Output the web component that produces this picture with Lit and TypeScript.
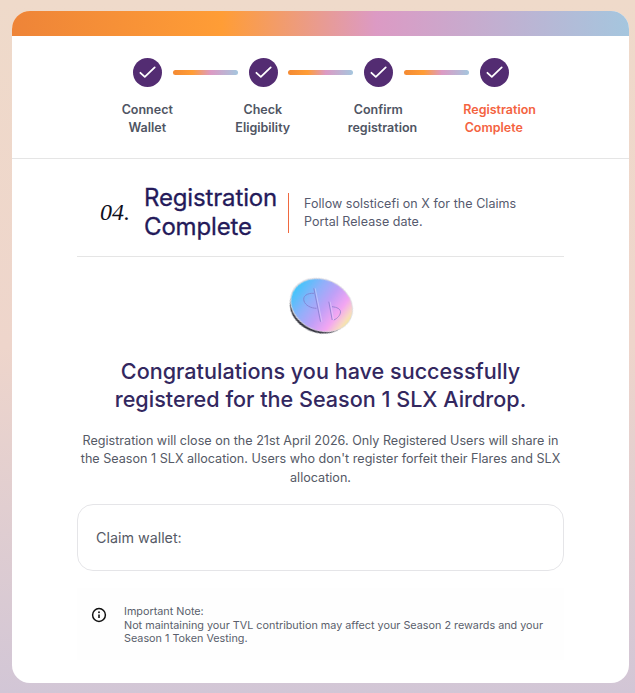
import { LitElement, html, css, svg } from "lit";
import { customElement } from "lit/decorators.js";

const steps: [string, string][] = [
  ["Connect", "Wallet"],
  ["Check", "Eligibility"],
  ["Confirm", "registration"],
  ["Registration", "Complete"],
];

const check = svg`<svg class="circle" viewBox="0 0 29 29" width="29" height="29"><circle cx="14.5" cy="14.5" r="14.5" fill="#532c72"/><path d="M7.4 14.8l4.4 4.1L21.7 9.4" fill="none" stroke="#fff" stroke-width="1.8" stroke-linecap="round" stroke-linejoin="round"/></svg>`;

const coin = svg`<svg width="70" height="62" viewBox="0 0 70 62">
  <defs>
    <linearGradient id="cg" gradientUnits="userSpaceOnUse" x1="4" y1="20" x2="66" y2="34">
      <stop offset="0" stop-color="#3fc6fb"/>
      <stop offset="0.3" stop-color="#8fb0fa"/>
      <stop offset="0.55" stop-color="#c0a0f7"/>
      <stop offset="0.78" stop-color="#f3a6f2"/>
      <stop offset="0.93" stop-color="#f8d8c4"/>
      <stop offset="1" stop-color="#f6ea9c"/>
    </linearGradient>
    <filter id="soft" x="-10%" y="-10%" width="120%" height="120%"><feGaussianBlur stdDeviation="0.5"/></filter>
    <filter id="soft2" x="-20%" y="-20%" width="140%" height="140%"><feGaussianBlur stdDeviation="0.7"/></filter>
  </defs>
  <ellipse cx="32" cy="31.5" rx="30" ry="24" transform="rotate(24 32 31.5)" fill="#34353f" filter="url(#soft2)"/>
  <ellipse cx="34.5" cy="28" rx="32.5" ry="26" transform="rotate(24 34.5 28)" fill="#dcdae0" filter="url(#soft)"/>
  <ellipse cx="34.7" cy="28.3" rx="31.5" ry="25.2" transform="rotate(24 34.7 28.3)" fill="url(#cg)" filter="url(#soft)"/>
  <g fill="none" stroke="#7f76c6" stroke-width="1" opacity="0.7" filter="url(#soft)" stroke-linejoin="round">
    <path d="M27 16.3C20 16 15.5 19 17 24c1.3 4.4 7 7.3 12.5 7.3"/>
    <path d="M26.8 11.3l6.7 33.4"/>
    <path d="M41.8 24.7l3.4 18.3"/>
    <path d="M45 29.7c5 .5 8.5 2.2 8.5 5.2s-3 6.6-6.7 8.1"/>
  </g>
  <g fill="none" stroke="#e6dcff" stroke-width="0.8" opacity="0.6">
    <path d="M28.2 11.3l6.7 33.4"/>
    <path d="M43.2 24.7l3.4 18.3"/>
  </g>
</svg>`;

@customElement("app-root")
export class AppRoot extends LitElement {
  static styles = css`
    :host {
      display: block;
      box-sizing: border-box;
      min-height: 693px;
      padding: 11px 6px 10px 12px;
      background: linear-gradient(180deg, #efdaca 0%, #eed5cb 50%, #d2c6d6 100%);
      font-family: Inter, "Noto Sans", sans-serif;
      color: #4b5563;
    }
    .card {
      background: #fff;
      border-radius: 18px;
      overflow: hidden;
      height: 672px;
    }
    .bar {
      height: 25px;
      background: linear-gradient(90deg, #ee8438 0%, #ff9d36 34%, #dc9ac4 59%, #a5c6de 100%);
    }
    .stepper {
      height: 123px;
      border-bottom: 1px solid #e5e5e5;
      padding-top: 22px;
      box-sizing: border-box;
    }
    .track {
      display: flex;
      justify-content: center;
      align-items: center;
      gap: 10.75px;
      padding-left: 0.5px;
    }
    .circle { display: block; flex: none; }
    .line {
      width: 65px;
      height: 5px;
      border-radius: 3px;
      background: linear-gradient(90deg, #f48a33 0%, #ff9d36 30%, #dc9ac4 58%, #a5c6de 100%);
    }
    .labels {
      display: flex;
      justify-content: center;
      gap: 54.5px;
      margin-top: 14px;
    }
    .label {
      width: 61px;
      text-align: center;
      font-size: 12.5px;
      font-weight: 600;
      line-height: 18px;
      color: #4f5563;
      white-space: nowrap;
    }
    .label span { display: block; }
    .label.active { color: #f4633f; }
    .content { padding: 0 65px; }
    .head {
      display: flex;
      align-items: center;
      height: 98px;
      border-bottom: 1px solid #e5e5e5;
      box-sizing: border-box;
      padding: 10px 0 0 23px;
    }
    .num {
      font-family: "Liberation Serif", serif;
      font-style: italic;
      font-size: 24px;
      color: #0f0f1e;
      width: 44px;
      flex: none;
    }
    h2 {
      margin: -2px 0 0;
      width: 144px;
      flex: none;
      font-size: 24px;
      font-weight: 400;
      line-height: 29px;
      letter-spacing: -0.15px;
      color: #241a5a;
      -webkit-text-stroke: 0.3px #241a5a;
    }
    .desc {
      border-left: 1px solid #f0693f;
      height: 40px;
      box-sizing: border-box;
      padding-left: 15px;
      font-size: 12.5px;
      line-height: 18px;
      color: #565a6e;
      letter-spacing: 0.05px;
      width: 240px;
      display: flex;
      align-items: center;
    }
    .coin { display: flex; justify-content: center; margin-top: 20px; height: 62px; }
    .coin svg { display: block; transform: translateX(1px); }
    h1 {
      margin: 18px 0 0;
      text-align: center;
      font-size: 21.6px;
      font-weight: 500;
      line-height: 28px;
      color: #33285f;
    }
    .para {
      margin: 19px -5px 0;
      text-align: center;
      font-size: 12.6px;
      line-height: 18.3px;
      color: #555a66;
    }
    .wallet {
      margin-top: 17.6px;
      height: 67px;
      box-sizing: border-box;
      border: 1px solid #e5e5e8;
      border-radius: 16px;
      padding: 0 18px;
      display: flex;
      align-items: center;
      font-size: 14.3px;
      color: #555a66;
    }
    .note {
      margin-top: 17px;
      display: flex;
      gap: 17px;
      padding: 17px 0 14px 14px;
      font-size: 10.8px;
      line-height: 13.5px;
      color: #5a5e6c;
      background: #fefefe;
    }
    .note svg { flex: none; margin-top: 2px; display: block; }
    .note div { width: 430px; }
  `;

  render() {
    return html`<div class="card">
      <div class="bar"></div>
      <div class="stepper">
        <div class="track">
          ${check}<div class="line"></div>${check}<div class="line"></div>${check}<div class="line"></div>${check}
        </div>
        <div class="labels">
          ${steps.map(
            ([a, b], i) =>
              html`<div class="label ${i === 3 ? "active" : ""}"><span>${a}</span><span>${b}</span></div>`
          )}
        </div>
      </div>
      <div class="content">
        <div class="head">
          <div class="num">04.</div>
          <h2>Registration Complete</h2>
          <div class="desc"><span>Follow solsticefi on X for the Claims<br />Portal Release date.</span></div>
        </div>
        <div class="coin">${coin}</div>
        <h1>Congratulations you have successfully<br />registered for the Season 1 SLX Airdrop.</h1>
        <p class="para">Registration will close on the 21st April 2026. Only Registered Users will share in<br />the Season 1 SLX allocation. Users who don't register forfeit their Flares and SLX<br />allocation.</p>
        <div class="wallet">Claim wallet:</div>
        <div class="note">
          <svg width="16" height="16" viewBox="0 0 16 16"><circle cx="8" cy="8" r="6.4" fill="none" stroke="#111" stroke-width="1.5"/><circle cx="8" cy="5.3" r="0.95" fill="#111"/><path d="M8 7.5v3.4" stroke="#111" stroke-width="1.6"/></svg>
          <div>Important Note:<br />Not maintaining your TVL contribution may affect your Season 2 rewards and your Season 1 Token Vesting.</div>
        </div>
      </div>
    </div>`;
  }
}
